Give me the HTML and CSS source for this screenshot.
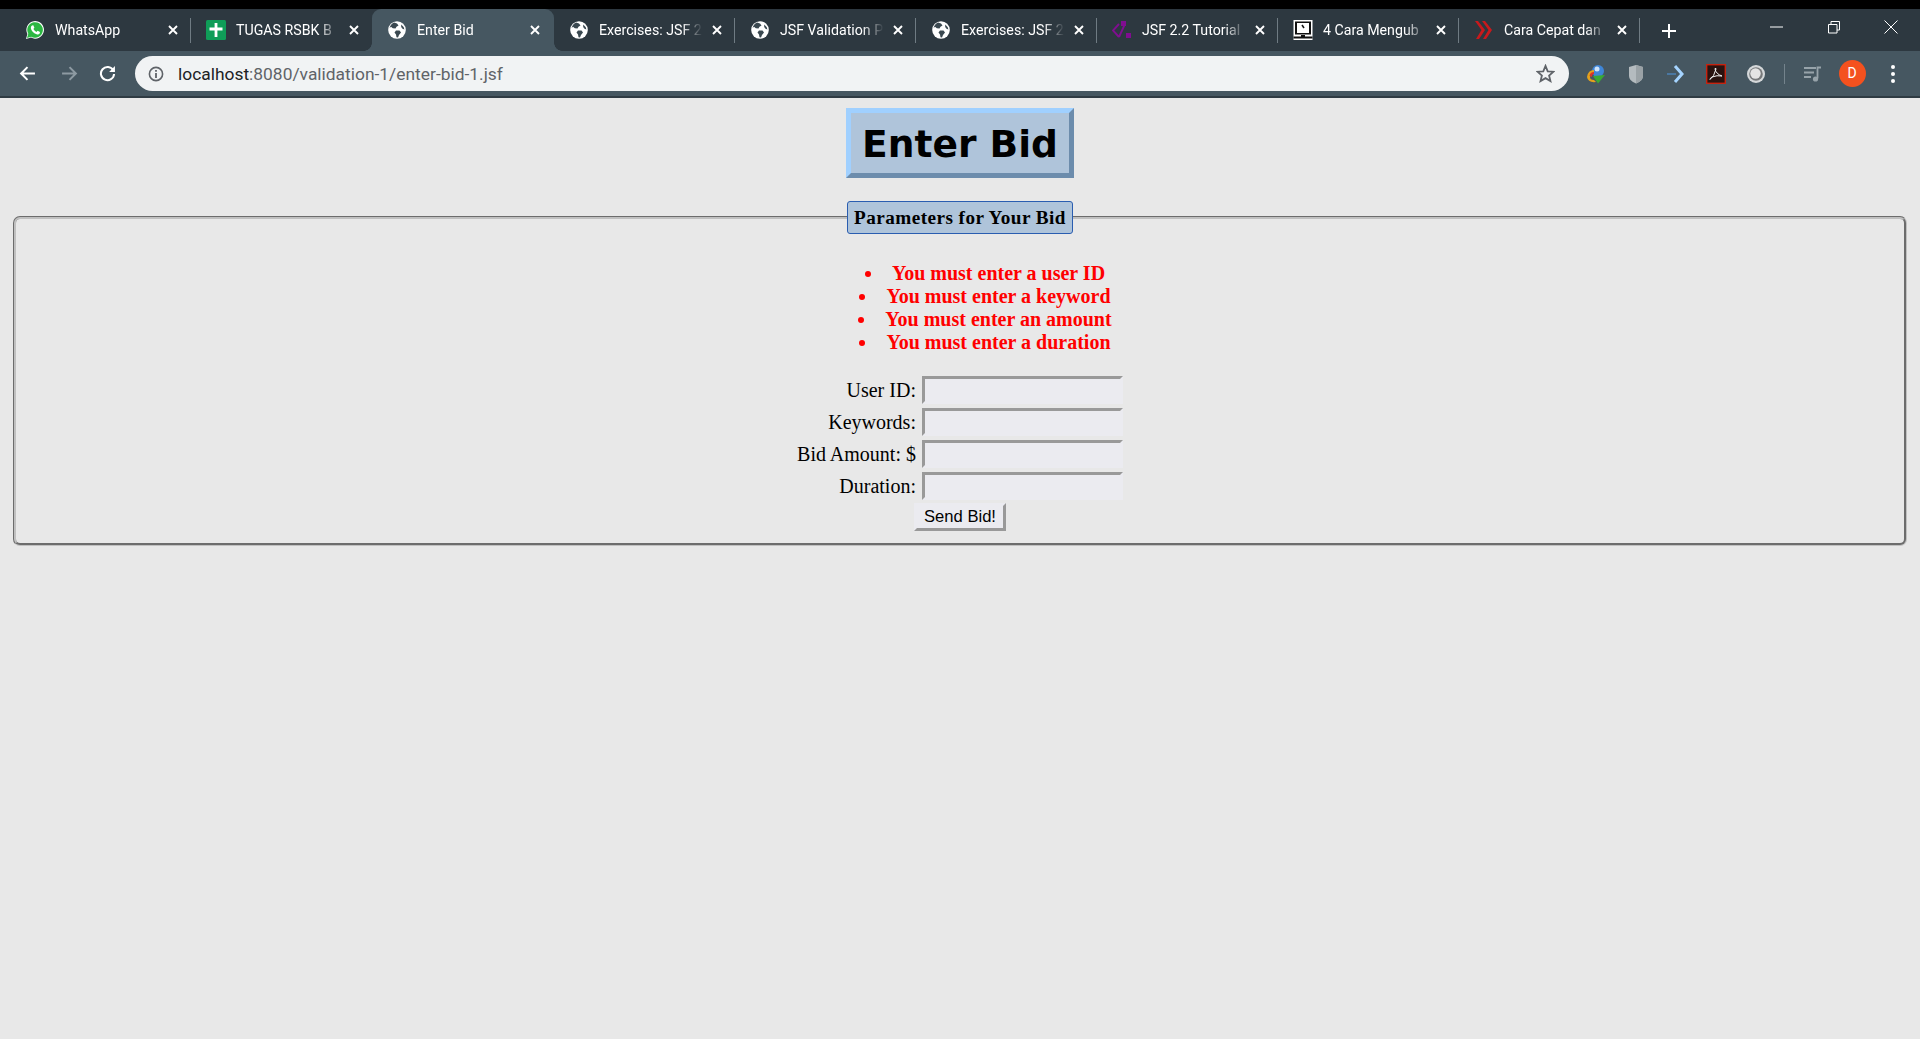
FILE: index.html
```html
<!DOCTYPE html>
<html>
<head>
  <meta charset="UTF-8">
  <title>Enter Bid</title>
  <link rel="stylesheet" href="styles.css">
</head>
<body>

  <!-- iconos repetidos -->
  <svg class="defs" width="0" height="0">
    <symbol id="globo" viewBox="-1 -1 20 20">
      <circle cx="9" cy="9" r="8.8" fill="#fff"/>
      <path d="M6 1.6 L9 2.6 L10.5 4.5 L8.5 5.8 L7.5 7.6 L4.8 7.2 L3 5.8 L1.6 7 Q2.4 3.2 6 1.6Z" fill="#3a4850"/>
      <path d="M8 9.5 L11.5 9.5 L13 11.5 L11 14 L10 16.4 L8.5 16.2 L8 13.5 L6.5 11.5Z" fill="#3a4850"/>
      <path d="M13.2 3.4 L15.6 6 L16.4 8.6 L14.5 7.8 L13.2 6Z" fill="#3a4850"/>
    </symbol>
    <symbol id="cerrar" viewBox="0 0 12 12">
      <path d="M2 2 L10 10 M10 2 L2 10" stroke="#fff" stroke-width="1.9" fill="none"/>
    </symbol>
  </svg>

  <div class="franja-negra"></div>

  <div class="pestanas">
    <div class="pestana con-linea">
      <svg class="favicon" viewBox="0 0 20 20">
        <path d="M1 19 L2.4 14 A8.8 8.8 0 1 1 6 17.6Z" fill="#fff"/>
        <path d="M2 18 L3.3 13.8 A7.8 7.8 0 1 1 6.2 16.7Z" fill="#2cb742"/>
        <path d="M7 5.5 L8.3 5.3 L9.4 7.8 L8.4 9 Q9.6 11.2 11.4 12 L12.6 10.8 L15 12 L14.7 13.4 Q13.6 14.8 11.6 14.2 Q6.6 12.4 5.8 8 Q5.8 6.2 7 5.5Z" fill="#fff"/>
      </svg>
      <span class="titulo">WhatsApp</span>
      <svg class="cerrar"><use href="#cerrar"/></svg>
    </div>
    <div class="pestana">
      <svg class="favicon" viewBox="0 0 20 20">
        <rect width="20" height="20" rx="1.5" fill="#0f9d58"/>
        <path d="M8.6 3 H11.4 V7.6 H16.5 V10.4 H11.4 V17 H8.6 V10.4 H3.5 V7.6 H8.6Z" fill="#fff"/>
      </svg>
      <span class="titulo">TUGAS RSBK B</span>
      <svg class="cerrar"><use href="#cerrar"/></svg>
    </div>
    <div class="pestana activa">
      <svg class="favicon"><use href="#globo"/></svg>
      <span class="titulo">Enter Bid</span>
      <svg class="cerrar"><use href="#cerrar"/></svg>
    </div>
    <div class="pestana con-linea">
      <svg class="favicon"><use href="#globo"/></svg>
      <span class="titulo">Exercises: JSF 2</span>
      <svg class="cerrar"><use href="#cerrar"/></svg>
    </div>
    <div class="pestana con-linea">
      <svg class="favicon"><use href="#globo"/></svg>
      <span class="titulo">JSF Validation P</span>
      <svg class="cerrar"><use href="#cerrar"/></svg>
    </div>
    <div class="pestana con-linea">
      <svg class="favicon"><use href="#globo"/></svg>
      <span class="titulo">Exercises: JSF 2</span>
      <svg class="cerrar"><use href="#cerrar"/></svg>
    </div>
    <div class="pestana con-linea">
      <svg class="favicon" viewBox="0 0 20 20">
        <path d="M7 4 L1 10.5 L7 17 M13 4 L7 17" stroke="#800e90" stroke-width="1.9" fill="none"/>
        <rect x="9" y="1" width="5" height="5" fill="#800e90"/>
        <rect x="14" y="13" width="5" height="5" fill="#800e90"/>
      </svg>
      <span class="titulo">JSF 2.2 Tutorial</span>
      <svg class="cerrar"><use href="#cerrar"/></svg>
    </div>
    <div class="pestana con-linea">
      <svg class="favicon" viewBox="0 0 20 20">
        <rect x="0.5" y="0" width="19" height="20" fill="#fff"/>
        <rect x="2" y="1.5" width="16" height="13" fill="#111"/>
        <rect x="4" y="3" width="12" height="10" fill="#fff"/>
        <path d="M9 5 L11 8" stroke="#111" stroke-width="1.5"/>
        <rect x="0.5" y="16.5" width="19" height="2" fill="#111"/>
        <rect x="8" y="15" width="4" height="2" fill="#111"/>
      </svg>
      <span class="titulo">4 Cara Mengub</span>
      <svg class="cerrar"><use href="#cerrar"/></svg>
    </div>
    <div class="pestana con-linea">
      <svg class="favicon" viewBox="0 0 20 20">
        <path d="M1 1 L4 1 L11 10 L5 19 L2 19 L7.5 10Z M8 1 L11 1 L18 10 L12 19 L9 19 L14.5 10Z" fill="#c8191c"/>
      </svg>
      <span class="titulo">Cara Cepat dan</span>
      <svg class="cerrar"><use href="#cerrar"/></svg>
    </div>
    <svg class="nueva" viewBox="0 0 16 16">
      <path d="M8 1 V15 M1 8 H15" stroke="#fff" stroke-width="2"/>
    </svg>
    <div class="ventana">
      <svg viewBox="0 0 14 14"><path d="M0 7 H13" stroke="#fff" stroke-width="1"/></svg>
      <svg viewBox="0 0 14 14"><path d="M1.5 4.5 H10 V13 H1.5Z M4 4.5 V1.5 H12.5 V10 H10" stroke="#fff" stroke-width="1" fill="none"/></svg>
      <svg viewBox="0 0 14 14"><path d="M0.5 0.5 L13.5 13.5 M13.5 0.5 L0.5 13.5" stroke="#fff" stroke-width="1" fill="none"/></svg>
    </div>
  </div>

  <div class="barra">
    <div class="boton">
      <svg viewBox="0 0 16 16"><path d="M15 8 H2.5 M8 2 L2 8 L8 14" stroke="#fff" stroke-width="1.9" fill="none"/></svg>
    </div>
    <div class="boton adelante">
      <svg viewBox="0 0 16 16"><path d="M1 8 H13.5 M8 2 L14 8 L8 14" stroke="#8d9aa2" stroke-width="1.9" fill="none"/></svg>
    </div>
    <div class="boton">
      <svg viewBox="0 0 16 16"><path d="M13.4 5 A6.2 6.2 0 1 0 14.2 8.5" stroke="#fff" stroke-width="1.9" fill="none"/><path d="M15 1 V6.5 H9.5Z" fill="#fff"/></svg>
    </div>
    <div class="direccion">
      <svg class="info" viewBox="0 0 16 16">
        <circle cx="8" cy="8" r="6.6" stroke="#5f6368" stroke-width="1.6" fill="none"/>
        <path d="M8 7 V12 M8 4 V5.8" stroke="#5f6368" stroke-width="1.8"/>
      </svg>
      <span class="url"><span class="host">localhost</span>:8080/validation-1/enter-bid-1.jsf</span>
      <svg class="estrella" viewBox="0 0 18 18">
        <path d="M9 1.8 L11.1 6.9 L16.6 7.3 L12.4 10.9 L13.7 16.2 L9 13.4 L4.3 16.2 L5.6 10.9 L1.4 7.3 L6.9 6.9Z" stroke="#5f6368" stroke-width="1.7" fill="none"/>
      </svg>
    </div>
    <div class="extensiones">
      <div class="ext">
        <svg viewBox="0 0 20 20">
          <circle cx="12" cy="7" r="6" fill="#3f86d8"/>
          <circle cx="11" cy="5" r="2.5" fill="#cfe4fa"/>
          <path d="M1 13 Q2 6 8 6 L8 9 Q5 9 4 13 Q4 16 8 16 L10 18 Q2 19 1 13Z" fill="#e3a21c"/>
          <path d="M3.5 12 Q4 8 8 8 L8 10 Q6 10 6 13Z" fill="#d9352b"/>
          <path d="M7 12 L19 11 L12 19.5Z" fill="#39a935"/>
        </svg>
      </div>
      <div class="ext">
        <svg viewBox="0 0 20 20"><path d="M10 1 L17 3 V12 Q17 17 10 19.5 Q3 17 3 12 V3Z" fill="#b4bbbf"/><path d="M10 1 L17 3 V12 Q17 17 10 19.5Z" fill="#9aa2a6"/></svg>
      </div>
      <div class="ext">
        <svg viewBox="0 0 20 20"><path d="M9 2 L16 10 L9 18" stroke="#a5d4ff" stroke-width="3" fill="none"/><path d="M1 10 H10" stroke="#4d86bd" stroke-width="1.4"/></svg>
      </div>
      <div class="ext">
        <svg viewBox="0 0 20 20">
          <rect x="0.7" y="0.7" width="18.6" height="18.6" fill="#2a1310" stroke="#c62310" stroke-width="1.4"/>
          <path d="M4 15.5 Q8 13 10 5 Q9.5 3 9 5 Q10 10 16 12 Q11 11 6 13 Q4 14 4 15.5Z" stroke="#f4f4f4" stroke-width="1" fill="none"/>
        </svg>
      </div>
      <div class="ext">
        <svg viewBox="0 0 20 20">
          <circle cx="10" cy="10" r="9" fill="#d5d8da"/>
          <circle cx="10" cy="10" r="6.8" fill="#77797b"/>
          <circle cx="9.5" cy="9.5" r="5.2" fill="#e4e4e4"/>
        </svg>
      </div>
      <div class="separador"></div>
      <div class="ext media">
        <svg viewBox="0 0 20 20">
          <path d="M1 4 H13 M1 8.5 H11 M1 13 H8" stroke="#97a3aa" stroke-width="1.8"/>
          <path d="M14.5 14.5 V3.5 H18" stroke="#97a3aa" stroke-width="1.8" fill="none"/>
          <circle cx="12.5" cy="15" r="2.6" fill="#97a3aa"/>
        </svg>
      </div>
      <div class="ext"><span class="avatar">D</span></div>
      <div class="ext puntos"><i></i><i></i><i></i></div>
    </div>
  </div>

  <div class="pagina">
    <h1 class="titulo-pagina">Enter Bid</h1>

    <fieldset class="parametros">
      <legend>Parameters for Your Bid</legend>

      <ul class="errores">
        <li>You must enter a user ID</li>
        <li>You must enter a keyword</li>
        <li>You must enter an amount</li>
        <li>You must enter a duration</li>
      </ul>

      <table class="formulario">
        <tr>
          <td class="etiqueta">User ID:</td>
          <td><input type="text"></td>
        </tr>
        <tr>
          <td class="etiqueta">Keywords:</td>
          <td><input type="text"></td>
        </tr>
        <tr>
          <td class="etiqueta">Bid Amount: $</td>
          <td><input type="text"></td>
        </tr>
        <tr>
          <td class="etiqueta">Duration:</td>
          <td><input type="text"></td>
        </tr>
        <tr>
          <td colspan="2" class="enviar"><button type="button">Send Bid!</button></td>
        </tr>
      </table>
    </fieldset>
  </div>

</body>
</html>
```

FILE: styles.css
```css
* {
  box-sizing: border-box;
}

html, body {
  height: 100%;
}

body {
  margin: 0;
  background-color: #e8e8e8;
  overflow: hidden;
  display: flex;
  flex-direction: column;
}

.defs {
  position: absolute;
}

.franja-negra {
  height: 9px;
  background-color: #000;
}

/* Pestañas */
.pestanas {
  display: flex;
  align-items: stretch;
  height: 42px;
  padding-left: 10px;
  background-color: #2d3840;
  font-family: Roboto, "Liberation Sans", sans-serif;
  font-size: 14.2px;
  color: #fff;
}

.pestana {
  position: relative;
  display: flex;
  align-items: center;
  width: 181px;
  padding-left: 15px;
}

.pestana.con-linea::after {
  content: "";
  position: absolute;
  right: 0;
  top: 9px;
  bottom: 8px;
  width: 1px;
  background-color: #6f7b83;
}

.pestana.activa {
  width: 182px;
  background-color: #465761;
  border-radius: 9px 9px 0 0;
}

/* curvas inferiores de la pestaña activa */
.pestana.activa::before,
.pestana.activa::after {
  content: "";
  position: absolute;
  bottom: 0;
  width: 8px;
  height: 8px;
}

.pestana.activa::before {
  left: -8px;
  background: radial-gradient(circle at 0 0, transparent 7.5px, #465761 8px);
}

.pestana.activa::after {
  right: -8px;
  background: radial-gradient(circle at 100% 0, transparent 7.5px, #465761 8px);
}

.favicon {
  width: 20px;
  height: 20px;
  flex: none;
}

.titulo {
  width: 108px;
  margin-left: 10px;
  white-space: nowrap;
  overflow: hidden;
  -webkit-mask-image: linear-gradient(to right, #000 76%, transparent 96%);
  mask-image: linear-gradient(to right, #000 76%, transparent 96%);
}

.cerrar {
  width: 12px;
  height: 12px;
  margin-left: 4px;
  flex: none;
}

.nueva {
  width: 16px;
  height: 16px;
  margin: 14px 0 0 21px;
}

.ventana {
  display: flex;
  gap: 43px;
  margin-left: auto;
  padding: 11px 22px 0 0;
}

.ventana svg {
  width: 14px;
  height: 14px;
}

/* Barra de direccion */
.barra {
  display: flex;
  align-items: center;
  height: 45px;
  padding-left: 8px;
  background-color: #465761;
}

.boton {
  display: flex;
  align-items: center;
  justify-content: center;
  width: 38px;
  height: 38px;
}

.boton.adelante {
  margin-left: 4px;
}

.boton svg {
  width: 17px;
  height: 17px;
}

.direccion {
  display: flex;
  align-items: center;
  flex: 1;
  height: 35px;
  margin-left: 9px;
  padding: 0 14px 0 13px;
  background-color: #f1f3f4;
  border-radius: 18px;
  font-family: Roboto, "Liberation Sans", sans-serif;
  font-size: 17.4px;
  color: #5f6368;
}

.info {
  width: 16px;
  height: 16px;
}

.url {
  margin-left: 14px;
}

.host {
  color: #202124;
}

.estrella {
  width: 19px;
  height: 19px;
  margin-left: auto;
}

.extensiones {
  display: flex;
  align-items: center;
  width: 351px;
  padding-left: 7px;
}

.ext {
  display: flex;
  align-items: center;
  justify-content: center;
  width: 40px;
  height: 38px;
}

.ext svg {
  width: 20px;
  height: 20px;
}

.separador {
  width: 1px;
  height: 20px;
  margin-left: 8px;
  background-color: #74838c;
}

.media {
  margin-left: 8px;
}

.avatar {
  width: 27px;
  height: 27px;
  margin-right: 2px;
  border-radius: 50%;
  background-color: #f4511e;
  color: #fff;
  font-family: Roboto, "Liberation Sans", sans-serif;
  font-size: 14px;
  line-height: 27px;
  text-align: center;
}

.puntos {
  flex-direction: column;
  gap: 3px;
}

.puntos i {
  width: 4px;
  height: 4px;
  border-radius: 50%;
  background-color: #fff;
}

/* Pagina */
.pagina {
  flex: 1;
  padding: 10px 13px 0;
  border-top: 2px solid #2f3b43;
  font-family: "Liberation Serif", serif;
  font-size: 20px;
  text-align: center;
}

.titulo-pagina {
  width: 228px;
  height: 70px;
  margin: 0 auto 23px;
  border: 5px solid;
  border-color: #a0d0ff #6c8cac #6c8cac #a0d0ff;
  background-color: #afc4da;
  font-family: "DejaVu Sans", sans-serif;
  font-size: 37.6px;
  line-height: 63px;
}

.parametros {
  margin: 0;
  padding: 28px 0 11px;
  min-width: 0;
  height: 345px;
  border: 3px groove #c0c0c0;
  border-radius: 7px;
}

.parametros legend {
  padding: 5px 6px 4px;
  border: 1px solid #2a5db0;
  border-radius: 3px;
  background-color: #afc4da;
  font-weight: bold;
  font-size: 19.2px;
  letter-spacing: 0.45px;
}

.errores {
  margin: 0 0 22px;
  padding-left: 50px;
  list-style-position: inside;
  color: #f00;
  font-weight: bold;
}

.formulario {
  margin: 0 auto;
  border-collapse: separate;
  border-spacing: 0;
}

.formulario td {
  padding: 0 0 4px 0;
}

.formulario .etiqueta {
  padding-right: 5px;
  text-align: right;
  white-space: nowrap;
}

input {
  display: block;
  width: 201px;
  height: 28px;
  margin-left: 1px;
  padding: 0 2px;
  border: 3px solid;
  border-color: #999 #ebebf0 #ebebf0 #999;
  background-color: #ebebf0;
}

.enviar {
  text-align: center;
}

button {
  width: 92px;
  height: 28px;
  margin-top: -1px;
  padding: 0;
  border: 3px solid;
  border-color: #ebebf0 #999 #999 #ebebf0;
  background-color: #ebebf0;
  font-family: "Liberation Sans", sans-serif;
  font-size: 16.6px;
  color: #000;
}
```
